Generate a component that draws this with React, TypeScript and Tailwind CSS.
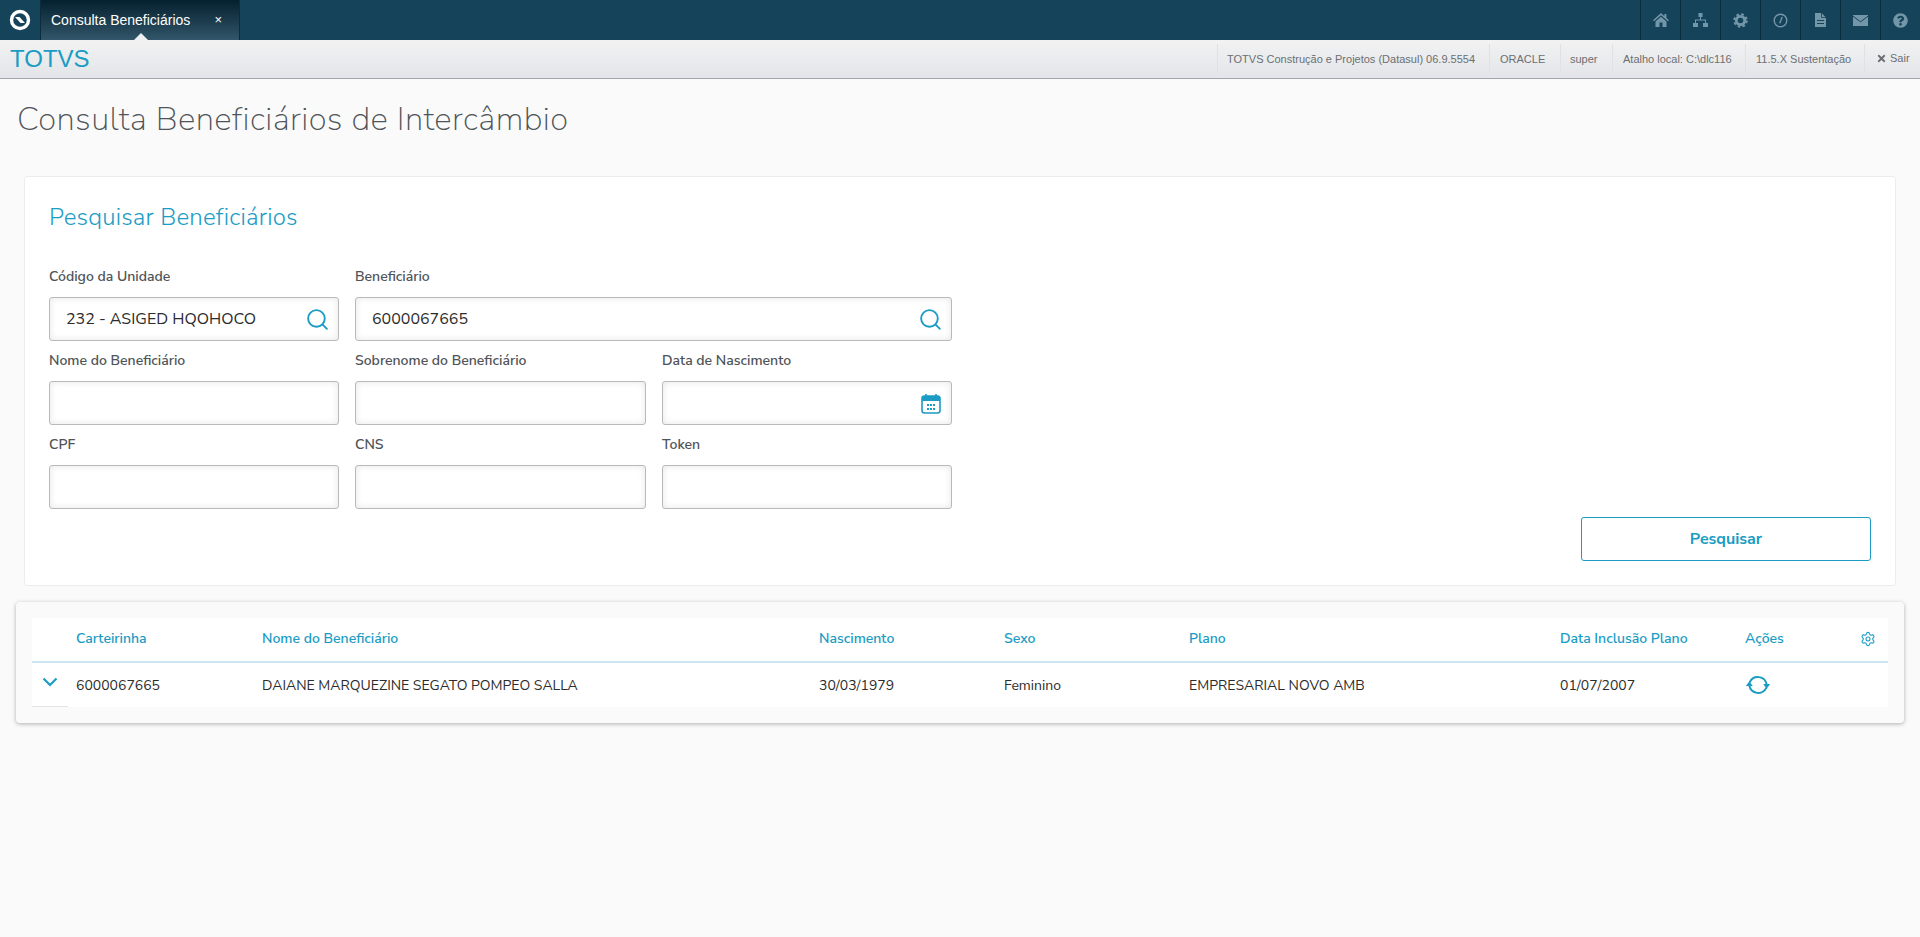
import React from "react";
import { FaQuestionCircle, FaTimes } from "react-icons/fa";
import { Search, Settings } from "lucide-react";

function TopIcon({ children }: { children: React.ReactNode }) {
  return (
    <div className="w-[40px] h-[40px] flex items-center justify-center border-l border-[#0b2c3d] text-[#7397a9] text-[15px]">
      {children}
    </div>
  );
}

function HomeIcon() {
  return (
    <svg width="16" height="14" viewBox="0 0 16 14" fill="currentColor">
      <path d="M8 0 0 7.2l1 1L8 2.2l7 6 1-1-2.6-2.3V1h-2v2.2z" />
      <path d="M2.5 8.6 8 3.8l5.5 4.8V14H9.5V9.6h-3V14h-4z" />
    </svg>
  );
}

function SitemapIcon() {
  return (
    <svg width="15" height="14" viewBox="0 0 15 14" fill="currentColor">
      <path d="M5.5 0h4v4h-4zM7 4h1v2.5h5V10h-1V7.5H3V10H2V6.5h5zM0 10h5v4H0zM10 10h5v4h-5z" />
    </svg>
  );
}

function CogIcon() {
  return (
    <svg width="15" height="15" viewBox="0 0 15 15" fill="none" stroke="currentColor">
      <circle cx="7.5" cy="7.5" r="4.2" strokeWidth="2.8" />
      <circle cx="7.5" cy="7.5" r="6.2" strokeWidth="2" strokeDasharray="2.6 2.27" />
    </svg>
  );
}

function ClockIcon() {
  return (
    <svg width="15" height="15" viewBox="0 0 16 16" fill="none" stroke="currentColor">
      <circle cx="8" cy="8" r="6.7" strokeWidth="1.5" />
      <path d="M9.8 4.2 7.2 11" strokeWidth="1.5" />
    </svg>
  );
}

function DocIcon() {
  return (
    <svg width="11" height="14" viewBox="0 0 11 14">
      <path d="M0 0h6.5L11 4.5V14H0z" fill="currentColor" />
      <path d="M2 7.5h7M2 10.5h7" stroke="#15435a" strokeWidth="1.2" />
      <path d="M6.5 0v4.5H11" fill="none" stroke="#15435a" strokeWidth="0.8" />
    </svg>
  );
}

function MailIcon() {
  return (
    <svg width="15" height="11" viewBox="0 0 15 11">
      <rect width="15" height="11" fill="currentColor" />
      <path d="M0 1.2 7.5 6.8 15 1.2" fill="none" stroke="#15435a" strokeWidth="1" />
    </svg>
  );
}

function InfoCell({ children, className }: { children: React.ReactNode; className: string }) {
  return <div className={`h-[30px] flex items-center whitespace-nowrap border-l border-[#dfe2e5] ${className}`}>{children}</div>;
}

function CalendarIcon() {
  return (
    <svg width="20" height="21" viewBox="0 0 20 21" fill="none" className="mr-[2px] text-[#1a9cc4]">
      <path d="M5 1v4M15 1v4" stroke="currentColor" strokeWidth="1.6" />
      <rect x="1" y="3" width="18" height="17" rx="2.5" stroke="currentColor" strokeWidth="1.6" />
      <rect x="1" y="3" width="18" height="5" fill="currentColor" />
      <path d="M6 11h2v2H6zM9 11h2v2H9zM12 11h2v2h-2zM6 15h2v2H6zM9 15h2v2H9zM12 15h2v2h-2z" fill="currentColor" />
    </svg>
  );
}

function SyncIcon() {
  return (
    <svg width="26" height="22" viewBox="0 0 24 20" fill="none" stroke="#1a9cc4" strokeWidth="1.8">
      <path d="M4.3 7.5A8.3 8.3 0 0 1 20 9.5" />
      <path d="M19.7 12.5A8.3 8.3 0 0 1 4 10.5" />
      <path d="M16.8 9h6.4L20 13.5z" fill="#1a9cc4" stroke="none" />
      <path d="M0.8 11h6.4L4 6.5z" fill="#1a9cc4" stroke="none" />
    </svg>
  );
}

function Field({ label, value, icon, className }: { label: string; value?: string; icon?: React.ReactNode; className?: string }) {
  return (
    <div className={className}>
      <div className="h-[21px] text-[14px] leading-[21px] font-semibold text-[#4f5458]">{label}</div>
      <div className="mt-[10px] h-[44px] flex items-center justify-between pl-[16px] pr-[8px] bg-white border border-[#b6babd] rounded-[3px] shadow-[inset_0_0_7px_rgba(0,0,0,0.1)]">
        <span className="text-[16px] text-[#2c2c2c]">{value}</span>
        {icon}
      </div>
    </div>
  );
}

const searchIcon = <Search size={25} strokeWidth={1.8} className="text-[#1a9cc4]" />;

const columns = "grid grid-cols-[44px_186px_557px_185px_185px_371px_185px_1fr_28px]";

export default function App() {
  return (
    <div className="min-h-[937px] bg-[#fafafa] font-['Nunito_Sans','Lato','Noto_Sans',sans-serif]">
      <header className="h-[40px] flex justify-between bg-[#15435a] font-['Liberation_Sans',sans-serif]">
        <div className="flex">
          <div className="w-[40px] flex items-center justify-center">
            <svg width="24" height="24" viewBox="0 0 24 24">
              <circle cx="12" cy="12" r="8.5" fill="none" stroke="#fff" strokeWidth="3.4" />
              <path d="M7 9h4.5l5.5 6h-4.5z" fill="#fff" />
            </svg>
          </div>
          <div className="relative w-[200px] pl-[10px] pr-[17px] flex items-center justify-between border-x border-[#0b2c3d] bg-gradient-to-b from-[#05212f] to-[#32566a] text-[14px] text-white">
            <span>Consulta Beneficiários</span>
            <span className="text-[13px]">×</span>
            <span className="absolute left-[93px] bottom-0 border-x-[7px] border-b-[7px] border-x-transparent border-b-[#eef0f1]" />
          </div>
        </div>
        <div className="flex">
          <TopIcon><HomeIcon /></TopIcon>
          <TopIcon><SitemapIcon /></TopIcon>
          <TopIcon><CogIcon /></TopIcon>
          <TopIcon><ClockIcon /></TopIcon>
          <TopIcon><DocIcon /></TopIcon>
          <TopIcon><MailIcon /></TopIcon>
          <TopIcon><FaQuestionCircle /></TopIcon>
        </div>
      </header>

      <div className="h-[39px] flex items-center justify-between pl-[10px] bg-gradient-to-b from-[#f2f2f2] to-[#e2e5e9] border-b border-[#a3a5a8] font-['Liberation_Sans',sans-serif]">
        <span className="text-[24px] leading-none text-[#1a9cc4]">TOTVS</span>
        <div className="flex items-center text-[11px] text-[#6b6f73]">
          <InfoCell className="w-[272px] pl-[9px]">TOTVS Construção e Projetos (Datasul) 06.9.5554</InfoCell>
          <InfoCell className="w-[71px] pl-[10px]">ORACLE</InfoCell>
          <InfoCell className="w-[52px] pl-[9px]">super</InfoCell>
          <InfoCell className="w-[133px] pl-[10px]">Atalho local: C:\dlc116</InfoCell>
          <InfoCell className="w-[119px] pl-[10px]">11.5.X Sustentação</InfoCell>
          <InfoCell className="w-[56px] pl-[11px] gap-[3px] pb-[2px]"><FaTimes className="text-[11px]" /> Sair</InfoCell>
        </div>
      </div>

      <h1 className="pl-[17px] pt-[18px] h-[97px] text-[33px] leading-[46px] font-extralight tracking-[0.4px] text-[#4f5458]">Consulta Beneficiários de Intercâmbio</h1>

      <section className="mx-[24px] h-[410px] pt-[24px] px-[24px] bg-white border border-[#eceded] rounded-[3px]">
        <h2 className="h-[33px] text-[24px] leading-[33px] font-light tracking-[0.2px] text-[#1a9cc4]">Pesquisar Beneficiários</h2>
        <div className="mt-[32px] w-[903px] grid grid-cols-[290px_291px_290px] gap-x-[16px] gap-y-[9px]">
          <Field label="Código da Unidade" value="232 - ASIGED HQOHOCO" icon={searchIcon} />
          <Field label="Beneficiário" value="6000067665" icon={searchIcon} className="col-span-2" />
          <Field label="Nome do Beneficiário" />
          <Field label="Sobrenome do Beneficiário" />
          <Field label="Data de Nascimento" icon={<CalendarIcon />} />
          <Field label="CPF" />
          <Field label="CNS" />
          <Field label="Token" />
        </div>
        <div className="mt-[8px] flex justify-end">
          <button className="w-[290px] h-[44px] border border-[#1a9cc4] rounded-[3px] text-[16px] font-bold text-[#1a9cc4]">Pesquisar</button>
        </div>
      </section>

      <section className="mx-[16px] mt-[16px] p-[16px] h-[121px] rounded-[4px] bg-[#fafafa] shadow-[0_1px_4px_rgba(0,0,0,0.3)]">
        <div className={`${columns} h-[45px] items-center pb-[2px] bg-white border-b-2 border-[#c9e7f1] text-[14px] font-semibold text-[#1a9cc4]`}>
          <span />
          <span>Carteirinha</span>
          <span>Nome do Beneficiário</span>
          <span>Nascimento</span>
          <span>Sexo</span>
          <span>Plano</span>
          <span>Data Inclusão Plano</span>
          <span>Ações</span>
          <Settings size={16} strokeWidth={1.6} />
        </div>
        <div className={`${columns} h-[44px] items-center bg-white text-[14px] text-[#2c2c2c]`}>
          <div className="w-[36px] h-full flex items-center pl-[10px] border-b border-[#e4e4e4]">
            <svg width="16" height="10" viewBox="0 0 16 10" fill="none" stroke="#1a9cc4" strokeWidth="2.2" className="-mt-[6px]"><path d="M1.5 1.5 8 8l6.5-6.5" /></svg>
          </div>
          <span>6000067665</span>
          <span>DAIANE MARQUEZINE SEGATO POMPEO SALLA</span>
          <span>30/03/1979</span>
          <span>Feminino</span>
          <span>EMPRESARIAL NOVO AMB</span>
          <span>01/07/2007</span>
          <SyncIcon />
          <span />
        </div>
      </section>
    </div>
  );
}
